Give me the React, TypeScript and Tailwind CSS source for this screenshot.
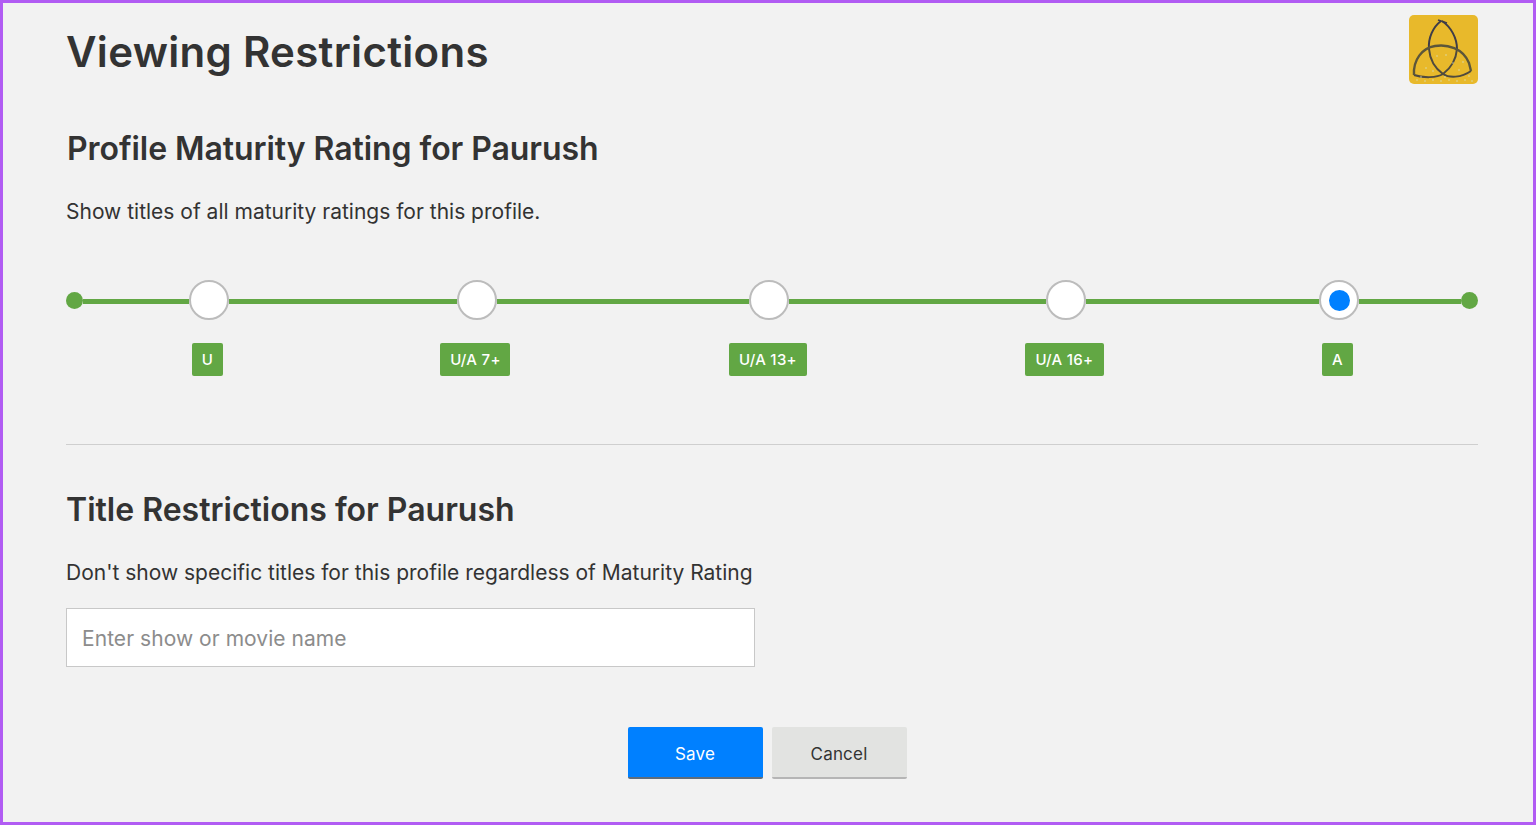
import React from "react";

const Seg = ({ w }: { w: string }) => <div className={`h-[5px] mt-[2px] bg-[#62a744] ${w}`} />;

const Dot = () => <div className="w-[17px] h-[17px] mt-[1px] shrink-0 rounded-full bg-[#62a744]" />;

const Knob = ({ active }: { active?: boolean }) => (
  <div className="w-10 h-10 shrink-0 rounded-full bg-white border-2 border-[#bcbcbc] flex items-center justify-center">
    {active && <div className="w-[21px] h-[21px] rounded-full bg-[#0080ff]" />}
  </div>
);

const Tag = ({ text, cls }: { text: string; cls: string }) => (
  <div className={`h-[33px] pt-[1px] rounded-[2px] bg-[#62a744] text-white text-[15px] tracking-[0.3px] font-medium flex items-center justify-center ${cls}`}>
    {text}
  </div>
);

const Logo = () => (
  <div className="w-[69px] h-[69px] rounded-[5px] bg-[#e8b92b] overflow-hidden">
    <svg viewBox="0 0 69 69" width="69" height="69" fill="none">
      <g stroke="#3f3d48" strokeWidth="2">
        <path d="M32 6 C24 12 19 23 20 34" />
        <path d="M33 6 C42 12 48 23 48 34" />
        <path d="M20 34 C21 46 27 54 34 59 C40 63 52 63 62 56" stroke="#4f4a3e" />
        <path d="M48 34 C47 45 42 53 34 59 C28 63 14 63 5 60" stroke="#4f4a3e" />
        <path d="M5 60 C4 45 13 33 26 31 C38 29 54 33 60 48 L62 56" stroke="#5c563a" strokeWidth="2.4" />
        <path d="M29 5 L38 8" strokeWidth="1.5" />
      </g>
      <g fill="#d9e4c8">
        <circle cx="28" cy="41" r="0.7" /><circle cx="37" cy="40" r="0.7" /><circle cx="44" cy="48" r="0.7" />
        <circle cx="17" cy="53" r="0.7" /><circle cx="24" cy="56" r="0.7" /><circle cx="50" cy="55" r="0.7" />
        <circle cx="8" cy="65" r="0.7" /><circle cx="16" cy="66" r="0.7" /><circle cx="24" cy="65" r="0.7" />
        <circle cx="32" cy="66" r="0.7" /><circle cx="40" cy="65" r="0.7" /><circle cx="48" cy="66" r="0.7" />
        <circle cx="56" cy="65" r="0.7" /><circle cx="63" cy="66" r="0.7" /><circle cx="12" cy="62" r="0.7" />
        <circle cx="60" cy="61" r="0.7" /><circle cx="36" cy="62" r="0.7" /><circle cx="54" cy="47" r="0.7" />
      </g>
    </svg>
  </div>
);

export default function App() {
  return (
    <div
      className="w-[1536px] h-[825px] overflow-hidden bg-[#f2f2f2] border-[3px] border-[#b15cf3] text-[#333333]"
      style={{ fontFamily: "Inter, 'Noto Sans', sans-serif" }}
    >
      <div className="pl-[63px] pr-[55px] pt-[12px]">
        <div className="flex justify-between items-start h-[69px]">
          <h1 className="text-[42px] leading-[50px] mt-[12px] font-semibold tracking-[0.3px]">Viewing Restrictions</h1>
          <Logo />
        </div>

        <h2 className="mt-[45px] ml-[1px] text-[32px] leading-[40px] font-semibold tracking-[-0.06px]">Profile Maturity Rating for Paurush</h2>
        <p className="mt-[29px] text-[21px] leading-[28px]">Show titles of all maturity ratings for this profile.</p>

        <div className="mt-[54px] flex items-center h-10">
          <Dot />
          <Seg w="w-[106px]" />
          <Knob />
          <Seg w="w-[228px]" />
          <Knob />
          <Seg w="w-[252px]" />
          <Knob />
          <Seg w="w-[257px]" />
          <Knob />
          <Seg w="w-[233px]" />
          <Knob active />
          <Seg w="w-[102px]" />
          <Dot />
        </div>

        <div className="mt-[23px] flex">
          <Tag text="U" cls="w-[31px] ml-[126px]" />
          <Tag text="U/A 7+" cls="w-[70px] ml-[217px] pl-[1px]" />
          <Tag text="U/A 13+" cls="w-[78px] ml-[219px]" />
          <Tag text="U/A 16+" cls="w-[79px] ml-[218px]" />
          <Tag text="A" cls="w-[31px] ml-[218px]" />
        </div>

        <div className="mt-[68px] h-px bg-[#cfcfcf]" />

        <h2 className="mt-[45px] text-[32px] leading-[40px] font-semibold">Title Restrictions for Paurush</h2>
        <p className="mt-[29px] text-[21px] leading-[28px]">Don't show specific titles for this profile regardless of Maturity Rating</p>

        <input
          placeholder="Enter show or movie name"
          className="block mt-[21px] w-[689px] h-[59px] px-[15px] pt-[2px] bg-white border border-[#c8c8c8] text-[21px] tracking-[0.05px] outline-none placeholder:text-[#8c8c8c]"
        />

        <div className="mt-[60px] flex justify-center gap-[9px] pr-[10px]">
          <button className="w-[135px] h-[52px] pt-[5px] rounded-[2px] bg-[#0080ff] text-white text-[17px] tracking-[0.2px] border-b-2 border-[#5f6d7c]">Save</button>
          <button className="w-[135px] h-[52px] pt-[5px] rounded-[2px] bg-[#e2e3e1] text-[#333333] text-[17px] tracking-[0.2px] border-b-2 border-[#b5b5b5]">Cancel</button>
        </div>
      </div>
    </div>
  );
}
